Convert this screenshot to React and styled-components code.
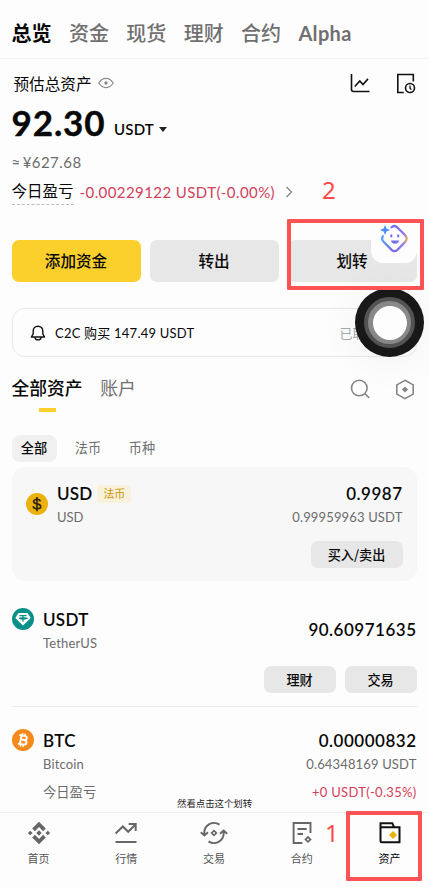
import styled, { createGlobalStyle } from "styled-components";

const tabs = ["总览", "资金", "现货", "理财", "合约", "Alpha"];

const App = () => {
  return (
    <>
      <GlobalStyle />
      <Page>
        <TopTabs>
          {tabs.map((tab, i) => (
            <TopTab key={tab} $active={i === 0}>
              {tab}
            </TopTab>
          ))}
        </TopTabs>

        <Summary>
          <LabelRow>
            <Label>预估总资产</Label>
            <EyeIcon />
            <Tools>
              <ChartIcon />
              <HistoryIcon />
            </Tools>
          </LabelRow>
          <BalanceRow>
            <Balance>92.30</Balance>
            <Unit>USDT</Unit>
            <Caret />
          </BalanceRow>
          <Fiat>
            <Approx>≈</Approx>¥627.68
          </Fiat>
          <PnlRow>
            <PnlLabel>今日盈亏</PnlLabel>
            <PnlValue>-0.00229122 USDT(-0.00%)</PnlValue>
            <ChevronIcon />
          </PnlRow>
        </Summary>

        <Actions>
          <ActionButton $primary>添加资金</ActionButton>
          <ActionButton>转出</ActionButton>
          <ActionButton>划转</ActionButton>
        </Actions>

        <Notice>
          <BellIcon />
          <NoticeText>C2C 购买 147.49 USDT</NoticeText>
          <NoticeState>已取消</NoticeState>
        </Notice>

        <AssetTabs>
          <AssetTab $active>全部资产</AssetTab>
          <AssetTab>账户</AssetTab>
          <AssetTools>
            <SearchIcon />
            <HexIcon />
          </AssetTools>
        </AssetTabs>

        <Chips>
          <Chip $active>全部</Chip>
          <Chip>法币</Chip>
          <Chip>币种</Chip>
        </Chips>

        <Card>
          <AssetRow>
            <DollarCoin />
            <Names>
              <Symbol $spacing="0.2px">
                USD <Tag>法币</Tag>
              </Symbol>
              <SubText>USD</SubText>
            </Names>
            <Amounts>
              <Amount $spacing="0.5px">0.9987</Amount>
              <SubText $spacing="0.15px">0.99959963 USDT</SubText>
            </Amounts>
          </AssetRow>
          <SmallButtons>
            <SmallButton $wide>买入/卖出</SmallButton>
          </SmallButtons>
        </Card>

        <Asset>
          <AssetRow>
            <TetherCoin />
            <Names>
              <Symbol $spacing="0.3px">USDT</Symbol>
              <SubText $spacing="0.15px">TetherUS</SubText>
            </Names>
            <Amounts $middle>
              <Amount $spacing="0.5px">90.60971635</Amount>
            </Amounts>
          </AssetRow>
          <SmallButtons>
            <SmallButton>理财</SmallButton>
            <SmallButton>交易</SmallButton>
          </SmallButtons>
        </Asset>

        <Asset $last>
          <AssetRow>
            <BitcoinCoin />
            <Names>
              <Symbol $spacing="0.3px">BTC</Symbol>
              <SubText $spacing="0.15px">Bitcoin</SubText>
              <DayLabel>今日盈亏</DayLabel>
            </Names>
            <Amounts>
              <Amount $spacing="0.5px">0.00000832</Amount>
              <SubText $spacing="0.15px">0.64348169 USDT</SubText>
              <DayValue>+0 USDT(-0.35%)</DayValue>
            </Amounts>
          </AssetRow>
        </Asset>

        <BottomNav>
          <NavItem>
            <HomeIcon />
            首页
          </NavItem>
          <NavItem>
            <MarketIcon />
            行情
          </NavItem>
          <NavItem>
            <TradeIcon />
            交易
          </NavItem>
          <NavItem>
            <FuturesIcon />
            合约
          </NavItem>
          <NavItem $active>
            <WalletIcon />
            资产
          </NavItem>
        </BottomNav>

        <Caption>然看点击这个划转</Caption>
        <Assistant>
          <AssistantIcon />
        </Assistant>
        <TouchBall>
          <TouchRing>
            <TouchDot />
          </TouchRing>
        </TouchBall>
        <TransferMark />
        <WalletMark />
        <Step $left={322} $top={174}>2</Step>
        <Step $left={325} $top={817}>1</Step>
      </Page>
    </>
  );
};

export default App;

/* icons */

const EyeIcon = () => (
  <svg width="16" height="12" viewBox="0 0 16 12" fill="none" stroke="#8b8b8b" strokeWidth="1.2">
    <path d="M.8 6C4.8-.2 11.2-.2 15.2 6 11.2 12.2 4.8 12.2.8 6z" />
    <circle cx="8" cy="6" r="1.7" fill="#8b8b8b" stroke="none" />
  </svg>
);

const ChartIcon = () => (
  <svg width="20" height="20" viewBox="0 0 20 20" fill="none" stroke="#111" strokeWidth="1.6">
    <path d="M1.5 1v15.5q0 2 2 2H19.5" />
    <path d="M4.8 13.5l5-5.6 3.2 3.6 5-5.6" />
  </svg>
);

const HistoryIcon = () => (
  <svg width="20" height="21" viewBox="0 0 20 21" fill="none" stroke="#111" strokeWidth="1.6">
    <path d="M17.3 8.5V1.5H1.8V19.5h6" />
    <circle cx="14" cy="15" r="4.5" />
    <path d="M14 12.5v2.7l1.4 1.4" strokeWidth="1.3" />
  </svg>
);

const ChevronIcon = () => (
  <svg width="8" height="12" viewBox="0 0 8 12" fill="none" stroke="#858585" strokeWidth="1.3">
    <path d="M1.5 1l5 5-5 5" />
  </svg>
);

const BellIcon = () => (
  <svg width="16" height="17" viewBox="0 0 16 17" fill="none" stroke="#111" strokeWidth="1.4">
    <path d="M3.2 7a4.8 4.8 0 0 1 9.6 0v2.8l1.8 3.2H1.4L3.2 9.8z" strokeLinejoin="round" />
    <path d="M5 13.2a3 2.7 0 0 0 6 0" />
  </svg>
);

const SearchIcon = () => (
  <svg width="20" height="20" viewBox="0 0 20 20" fill="none" stroke="#858585" strokeWidth="1.6">
    <circle cx="9.3" cy="9" r="7.8" />
    <path d="M14.8 14.5l4.4 4.4" />
  </svg>
);

const HexIcon = () => (
  <svg width="20" height="21" viewBox="0 0 20 21">
    <path d="M10 1.3l8.2 4.6v9.2L10 19.7l-8.2-4.6V5.9z" fill="none" stroke="#858585" strokeWidth="1.6" />
    <path d="M10 7.4l3.1 3.1-3.1 3.1-3.1-3.1z" fill="#858585" />
  </svg>
);

const DollarCoin = () => (
  <CoinSvg viewBox="0 0 22 22">
    <circle cx="11" cy="11" r="11" fill="#ebb10d" />
    <path
      d="M14.5 8.3Q13.6 6.3 11 6.3T7.6 8.5c0 1.4 1.2 1.9 3.4 2.4s3.7 1 3.7 2.5-1.4 2.4-3.7 2.4-3.6-1-3.8-2.6M11 3.9v14.4"
      fill="none"
      stroke="#2a230e"
      strokeWidth="1.6"
    />
  </CoinSvg>
);

const TetherCoin = () => (
  <CoinSvg viewBox="0 0 22 22">
    <circle cx="11" cy="11" r="11" fill="#0a9088" />
    <path d="M6.5 5h9l3.2 5L11 17.6 3.3 10z" fill="#fff" />
    <path d="M7.4 7.7h7.2M11 7.7v6M7 10.3q4 1.7 8 0-4-1.5-8 0" fill="none" stroke="#0a9088" strokeWidth="1.2" />
  </CoinSvg>
);

const BitcoinCoin = () => (
  <CoinSvg viewBox="0 0 22 22">
    <circle cx="11" cy="11" r="11" fill="#f58a1b" />
    <g fill="none" stroke="#fff" strokeWidth="1.9" transform="rotate(10 11 11)">
      <path d="M6.6 6.6H12c3.3 0 3.3 4.2 0 4.2H8.6M12 10.8c3.9 0 3.9 4.6 0 4.6H6.6M8.7 6.6v8.8" />
      <path d="M9.5 4.2v2.4M12.2 4.2v2.4M9.5 15.4v2.5M12.2 15.4v2.5" strokeWidth="1.5" />
    </g>
  </CoinSvg>
);

const HomeIcon = () => (
  <svg width="24" height="24" viewBox="0 0 24 24" fill="#666">
    <path d="M12 .8l6.8 6.7-2.7 2.7L12 6.1l-4.1 4.1-2.7-2.7z" />
    <path d="M12 23.2l6.8-6.7-2.7-2.7-4.1 4.1-4.1-4.1-2.7 2.7z" />
    <path d="M12 9.3l2.7 2.7-2.7 2.7L9.3 12zM3.2 9.7L5.5 12l-2.3 2.3L.9 12zM20.8 9.7l2.3 2.3-2.3 2.3-2.3-2.3z" />
  </svg>
);

const MarketIcon = () => (
  <svg width="24" height="24" viewBox="0 0 24 24" fill="none" stroke="#666" strokeWidth="2">
    <path d="M1.6 12.5l7.2-7 5.4 5.3 7.5-7.6M14.7 3h7v7M1.5 21h21" />
  </svg>
);

const TradeIcon = () => (
  <svg width="28" height="24" viewBox="0 0 28 24" fill="none" stroke="#666" strokeWidth="1.9">
    <path d="M19.5 3.6A9.8 9.8 0 0 0 4.3 12v2M.8 11.2l3.6 3.2 3.6-3.2" />
    <path d="M8.5 20.4A9.8 9.8 0 0 0 23.7 12v-2M20 12.8l3.6-3.2 3.6 3.2" />
    <path d="M14 8.5l3.5 3.5-3.5 3.5-3.5-3.5z" fill="#666" stroke="none" />
    <circle cx="14" cy="12" r="1" fill="#fff" stroke="none" />
  </svg>
);

const FuturesIcon = () => (
  <svg width="24" height="24" viewBox="0 0 24 24" fill="none" stroke="#666" strokeWidth="1.9">
    <path d="M20.5 12V2H3.6v20h8.7M7.5 8h9.2M7.5 13h5.5" />
    <path d="M18 14.7l3.7 3.7-3.7 3.7-3.7-3.7z" fill="#666" stroke="none" />
    <circle cx="18" cy="18.4" r="1" fill="#fff" stroke="none" />
  </svg>
);

const WalletIcon = () => (
  <svg width="24" height="24" viewBox="0 0 24 24" fill="none" stroke="#111" strokeWidth="2">
    <path d="M2.5 6V2.2h11.8L16 6M2.5 6.3h19v15H4Q2.5 21.3 2.5 19.8z" />
    <path d="M15 10l4 4-4 4-4-4z" fill="#ebb10d" stroke="none" />
  </svg>
);

const AssistantIcon = () => (
  <svg width="30" height="30" viewBox="0 0 30 30" fill="none">
    <defs>
      <linearGradient id="bot" x1="2" y1="12" x2="29" y2="15" gradientUnits="userSpaceOnUse">
        <stop stopColor="#57a7f5" />
        <stop offset=".5" stopColor="#7b68e8" />
        <stop offset=".85" stopColor="#8f7bea" />
        <stop offset="1" stopColor="#f7c34a" />
      </linearGradient>
    </defs>
    <path
      d="M12.5 3.3Q15.5.7 18.4 3.5l8 8Q29 14.6 26.4 17.7l-8 8.1q-2.9 2.7-5.8 0l-8-8.1Q2 14.9 3.8 12.3"
      stroke="url(#bot)"
      strokeWidth="2.3"
      strokeLinecap="round"
    />
    <path d="M6 1l1.4 3.6L11 6 7.4 7.4 6 11 4.6 7.4 1 6l3.6-1.4z" fill="#4c8df5" />
    <path d="M12.3 10.5v2.7M19.2 10.5v2.7" stroke="#7168e8" strokeWidth="1.9" />
    <path d="M12 16.5h8q-.7 3.2-4 3.2t-4-3.2z" fill="#7770ea" />
  </svg>
);

/* styles */

const GlobalStyle = createGlobalStyle`
  body {
    margin: 0;
    background: #fdfdfd;
  }
  * {
    box-sizing: border-box;
  }
  svg {
    display: block;
    flex-shrink: 0;
  }
`;

const Page = styled.div`
  position: relative;
  display: flex;
  flex-direction: column;
  width: 429px;
  height: 887px;
  overflow: hidden;
  background: #fdfdfd;
  color: #080808;
  font-family: Lato, "Noto Sans CJK SC", sans-serif;
  white-space: nowrap;
`;

const TopTabs = styled.nav`
  display: flex;
  align-items: center;
  gap: 17.4px;
  height: 59px;
  padding: 8px 11.5px 0;
  border-bottom: 1px solid #f2f2f2;
`;

const TopTab = styled.span`
  font-size: 20px;
  font-weight: ${({ $active }) => ($active ? 700 : 500)};
  line-height: 30px;
  color: ${({ $active }) => ($active ? "#080808" : "#707070")};

  &:last-child {
    font-weight: 700;
    letter-spacing: 0.3px;
  }
`;

const Summary = styled.section`
  display: flex;
  flex-direction: column;
  padding: 9px 13px 0 11.5px;
`;

const LabelRow = styled.div`
  display: flex;
  align-items: center;
  height: 30px;
`;

const Label = styled.span`
  margin: 0 7px 0 2px;
  font-size: 15.6px;
`;

const Tools = styled.div`
  display: flex;
  gap: 26px;
  margin-left: auto;
`;

const BalanceRow = styled.div`
  display: flex;
  align-items: baseline;
  height: 50px;
  margin-top: -1px;
`;

const Balance = styled.span`
  font-size: 35px;
  font-weight: 700;
  line-height: 50px;
  letter-spacing: 0.9px;
  -webkit-text-stroke: 0.4px #080808;
`;

const Unit = styled.span`
  margin-left: 8.5px;
  font-size: 15px;
  font-weight: 600;
  letter-spacing: 0.2px;
  transform: translateY(-1px);
`;

const Caret = styled.i`
  align-self: center;
  margin: 14px 0 0 5px;
  border: 4px solid transparent;
  border-top: 5px solid #222;
  border-bottom: 0;
`;

const Fiat = styled.div`
  height: 28px;
  margin-top: 1px;
  font-size: 15px;
  line-height: 29px;
  color: #6c6c6c;
  letter-spacing: 0.45px;
`;

const Approx = styled.span`
  margin-right: 2px;
`;

const PnlRow = styled.div`
  display: flex;
  align-items: center;
  height: 28px;
  margin-top: 2px;
`;

const PnlLabel = styled.span`
  height: 26px;
  font-size: 15.5px;
  line-height: 25px;
  border-bottom: 1px dashed #bdbdbd;
`;

const PnlValue = styled.span`
  margin: 0 10px 0 6px;
  font-size: 15px;
  letter-spacing: 0.42px;
  color: #d2405a;
`;

const Actions = styled.div`
  display: flex;
  gap: 9px;
  margin-top: 34px;
  padding: 0 11.5px;
`;

const ActionButton = styled.button`
  width: 129px;
  height: 42px;
  padding: 0 0 2px;
  border: 0;
  border-radius: 7px;
  background: ${({ $primary }) => ($primary ? "#fbd02d" : "#e7e7e7")};
  color: #080808;
  font: 500 15.6px "Noto Sans CJK SC", sans-serif;
`;

const Notice = styled.div`
  display: flex;
  align-items: center;
  width: 405px;
  height: 49px;
  margin: 26px 12px 0 11.5px;
  padding: 0 16px 1px 17px;
  border: 1px solid #e8e8e8;
  border-radius: 13px;
`;

const NoticeText = styled.span`
  margin-left: 9.5px;
  font-size: 13px;
  letter-spacing: 0.22px;
`;

const NoticeState = styled.span`
  width: 60px;
  margin-left: auto;
  font-size: 13px;
  color: #a8a8a8;
`;

const AssetTabs = styled.div`
  display: flex;
  gap: 17.5px;
  height: 54px;
  margin-top: 17px;
  padding: 0 14px 0 11.5px;
`;

const AssetTab = styled.div`
  display: flex;
  flex-direction: column;
  align-items: center;
  font-size: 17.8px;
  font-weight: ${({ $active }) => ($active ? 500 : 400)};
  line-height: 28px;
  color: ${({ $active }) => ($active ? "#080808" : "#707070")};

  &::after {
    content: "";
    width: 17px;
    height: 4px;
    margin-top: 6px;
    background: ${({ $active }) => ($active ? "#fbd02d" : "transparent")};
  }
`;

const AssetTools = styled.div`
  display: flex;
  align-items: center;
  gap: 25px;
  height: 30px;
  margin-left: auto;
`;

const Chips = styled.div`
  display: flex;
  gap: 9px;
  height: 27px;
  margin-top: 7px;
  padding: 0 11.5px;
`;

const Chip = styled.span`
  width: 45px;
  border-radius: 8px;
  background: ${({ $active }) => ($active ? "#f0f0f0" : "transparent")};
  color: ${({ $active }) => ($active ? "#080808" : "#707070")};
  font-size: 13.2px;
  font-weight: ${({ $active }) => ($active ? 500 : 400)};
  line-height: 27px;
  text-align: center;
`;

const Card = styled.section`
  width: 405px;
  height: 114px;
  margin: 5px 12px 0 11.5px;
  padding: 12px 14px 13px;
  border-radius: 13px;
  background: #f7f7f7;
  display: flex;
  flex-direction: column;
`;

const Asset = styled.section`
  display: flex;
  flex-direction: column;
  height: ${({ $last }) => ($last ? "105px" : "126px")};
  margin: 0 12px 0 11.5px;
  padding: ${({ $last }) => ($last ? "19px" : "24px")} 0 13px;
  width: 405px;
  border-bottom: ${({ $last }) => ($last ? "0" : "1px solid #ebebeb")};
`;

const AssetRow = styled.div`
  display: flex;
`;

const CoinSvg = styled.svg`
  width: 22px;
  height: 22px;
  margin-top: 3px;

  ${Card} & {
    margin-top: 14px;
  }
`;

const Names = styled.div`
  margin-left: 9.5px;
`;

const Amounts = styled.div`
  display: flex;
  flex-direction: column;
  align-items: flex-end;
  margin-left: auto;
  padding-top: ${({ $middle }) => ($middle ? "10px" : "0")};
`;

const Symbol = styled.div`
  display: flex;
  align-items: center;
  height: 29px;
  font-size: 17px;
  font-weight: 600;
  letter-spacing: ${({ $spacing = "0" }) => $spacing};
`;

const Tag = styled.span`
  margin-left: 5px;
  padding: 0 6px;
  border-radius: 4px;
  background: #f8f1dc;
  color: #c99400;
  font-size: 11px;
  font-weight: 400;
  line-height: 18px;
  letter-spacing: 0;
`;

const Amount = styled.div`
  font-size: 17px;
  font-weight: 600;
  line-height: 29px;
  letter-spacing: ${({ $spacing = "0" }) => $spacing};
`;

const SubText = styled.div`
  height: 19px;
  font-size: 13px;
  line-height: 19px;
  letter-spacing: ${({ $spacing = "0" }) => $spacing};
  color: #6c6c6c;
`;

const DayLabel = styled.div`
  margin-top: 8px;
  font-size: 13.3px;
  line-height: 20px;
  color: #6c6c6c;
`;

const DayValue = styled(DayLabel)`
  font-size: 13px;
  letter-spacing: 0.3px;
  color: #d2405a;
`;

const SmallButtons = styled.div`
  display: flex;
  justify-content: flex-end;
  gap: 9px;
  margin-top: auto;
`;

const SmallButton = styled.button`
  width: ${({ $wide }) => ($wide ? "92px" : "72px")};
  height: 27px;
  padding: 0 0 1px;
  border: 0;
  border-radius: 7px;
  background: #e7e7e7;
  color: #080808;
  font: 500 13.1px "Noto Sans CJK SC", sans-serif;
`;

const BottomNav = styled.nav`
  display: flex;
  justify-content: space-between;
  height: 75px;
  margin-top: auto;
  padding: 8px 17.5px 0 16.5px;
  border-top: 1px solid #efefef;
  background: #fdfdfd;
`;

const NavItem = styled.div`
  display: flex;
  flex-direction: column;
  align-items: center;
  gap: 6px;
  width: 44px;
  font-size: 11px;
  line-height: 16px;
  color: ${({ $active }) => ($active ? "#080808" : "#555")};
`;

/* floating layers */

const Caption = styled.div`
  position: absolute;
  left: 177px;
  top: 797px;
  font-size: 9.4px;
  line-height: 14px;
  color: #222;
`;

const Assistant = styled.div`
  position: absolute;
  left: 371px;
  top: 215px;
  display: flex;
  align-items: center;
  justify-content: center;
  width: 46px;
  height: 48px;
  border-radius: 12px;
  background: #fdfdfd;
`;

const TouchBall = styled.div`
  position: absolute;
  left: 355px;
  top: 288px;
  display: flex;
  align-items: center;
  justify-content: center;
  width: 69px;
  height: 69px;
  border-radius: 50%;
  background: #181818;
  box-shadow: 0 3px 30px 14px rgba(0, 0, 0, 0.025);
`;

const TouchRing = styled.div`
  display: flex;
  align-items: center;
  justify-content: center;
  width: 51px;
  height: 51px;
  border: 4px solid #535353;
  border-radius: 50%;
  background: #888;
`;

const TouchDot = styled.div`
  width: 34px;
  height: 34px;
  border-radius: 50%;
  background: #fdfdfd;
`;

const TransferMark = styled.div`
  position: absolute;
  left: 287px;
  top: 219px;
  width: 137px;
  height: 71px;
  border: 4px solid #fd5354;
  border-radius: 1px;
`;

const WalletMark = styled(TransferMark)`
  left: 346px;
  top: 811px;
  width: 76px;
  height: 70px;
`;

const Step = styled.span`
  position: absolute;
  left: ${({ $left }) => $left}px;
  top: ${({ $top }) => $top}px;
  font: 24px/32px "Noto Sans", sans-serif;
  color: #fd4b4b;
`;
